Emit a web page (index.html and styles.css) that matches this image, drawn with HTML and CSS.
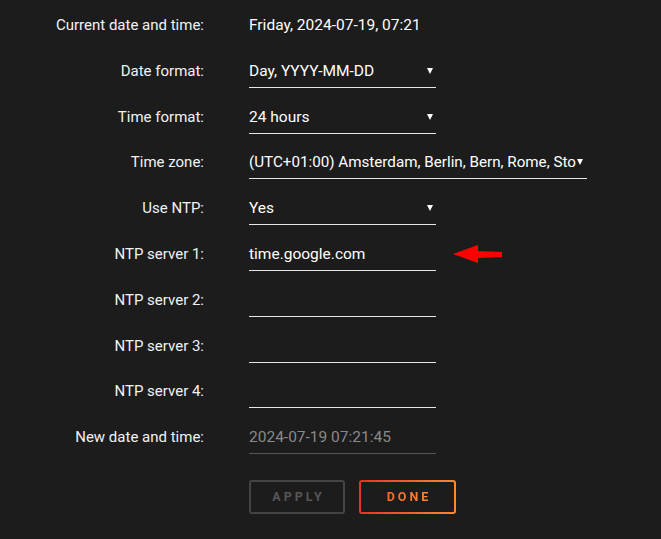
FILE: index.html
```html
<!DOCTYPE html>
<html lang="en">
<head>
    <meta charset="UTF-8">
    <meta name="viewport" content="width=device-width, initial-scale=1.0">
    <title>Date and time</title>
    <link rel="stylesheet" href="styles.css">
</head>
<body>
    <form class="settings">
        <label class="label">Current date and time:</label>
        <div class="value plain">Friday, 2024-07-19, 07:21</div>

        <label class="label">Date format:</label>
        <div class="value select">Day, YYYY-MM-DD<span class="caret"></span></div>

        <label class="label">Time format:</label>
        <div class="value select">24 hours<span class="caret"></span></div>

        <label class="label">Time zone:</label>
        <div class="value select wide"><span>(UTC+01:00) Amsterdam, Berlin, Bern, Rome, Sto</span><span class="caret"></span></div>

        <label class="label">Use NTP:</label>
        <div class="value select">Yes<span class="caret"></span></div>

        <label class="label">NTP server 1:</label>
        <div class="value marked">time.google.com
            <!-- pointer to the edited server -->
            <svg class="pointer" width="52" height="20" viewBox="0 0 52 20">
                <polygon points="0,9 25,0 25,6 49,7 49,12 25,13 25,18" fill="#f00"/>
            </svg>
        </div>

        <label class="label">NTP server 2:</label>
        <div class="value"></div>

        <label class="label">NTP server 3:</label>
        <div class="value"></div>

        <label class="label">NTP server 4:</label>
        <div class="value"></div>

        <label class="label">New date and time:</label>
        <div class="value muted">2024-07-19 07:21:45</div>

        <div></div>
        <div class="actions">
            <button type="button" class="btn apply">APPLY</button>
            <button type="button" class="btn done"><span>DONE</span></button>
        </div>
    </form>
</body>
</html>
```

FILE: styles.css
```css
body {
    margin: 0;
    padding: 0;
    background-color: #1c1c1c;
    color: #fff;
    font-family: 'Roboto', 'Liberation Sans', sans-serif;
    font-size: 15px;
}

.settings {
    display: grid;
    grid-template-columns: 204px 187px;
    column-gap: 45px;
    row-gap: 18.8px;
    padding-top: 15px;
}

.label {
    text-align: right;
    line-height: 20px;
    color: #f2f2f2;
}

.value {
    font-size: 15.5px;
    line-height: 20px;
    height: 20px;
    padding-bottom: 6px;
    border-bottom: 1px solid #e6e6e6;
    white-space: nowrap;
    position: relative;
}

.value.plain {
    border-bottom-color: transparent;
}

.value.muted {
    color: #8a8a8a;
    border-bottom-color: #555;
}

.select {
    display: flex;
    justify-content: space-between;
    align-items: center;
    align-self: start;
}

/* time zone list is wider than the other selects */
.select.wide {
    width: 338px;
    font-size: 15.2px;
    justify-content: flex-start;
}

.caret {
    width: 0;
    height: 0;
    margin-right: 3px;
    border-left: 3px solid transparent;
    border-right: 3px solid transparent;
    border-top: 6px solid #fff;
    flex-shrink: 0;
}

.wide .caret {
    margin-left: 1px;
}

.pointer {
    position: absolute;
    left: 204px;
    top: 1px;
}

.actions {
    display: flex;
    gap: 14px;
    margin-top: 7px;
}

.btn {
    flex-shrink: 0;
    height: 34px;
    border-radius: 3px;
    font-family: 'Roboto', 'Liberation Sans', sans-serif;
    font-size: 12.5px;
    font-weight: bold;
    letter-spacing: 3px;
    cursor: pointer;
    padding: 0 0 0 3px;
}

.apply {
    width: 96px;
    background: transparent;
    border: 2px solid #444;
    color: #565656;
}

.done {
    width: 97px;
    border: 2px solid transparent;
    background:
        linear-gradient(#1c1c1c, #1c1c1c) padding-box,
        linear-gradient(90deg, #e8312b, #ff8a2c) border-box;
}

.done span {
    background: linear-gradient(90deg, #ff6a2a, #ff8a2c);
    -webkit-background-clip: text;
    background-clip: text;
    color: transparent;
}
```
